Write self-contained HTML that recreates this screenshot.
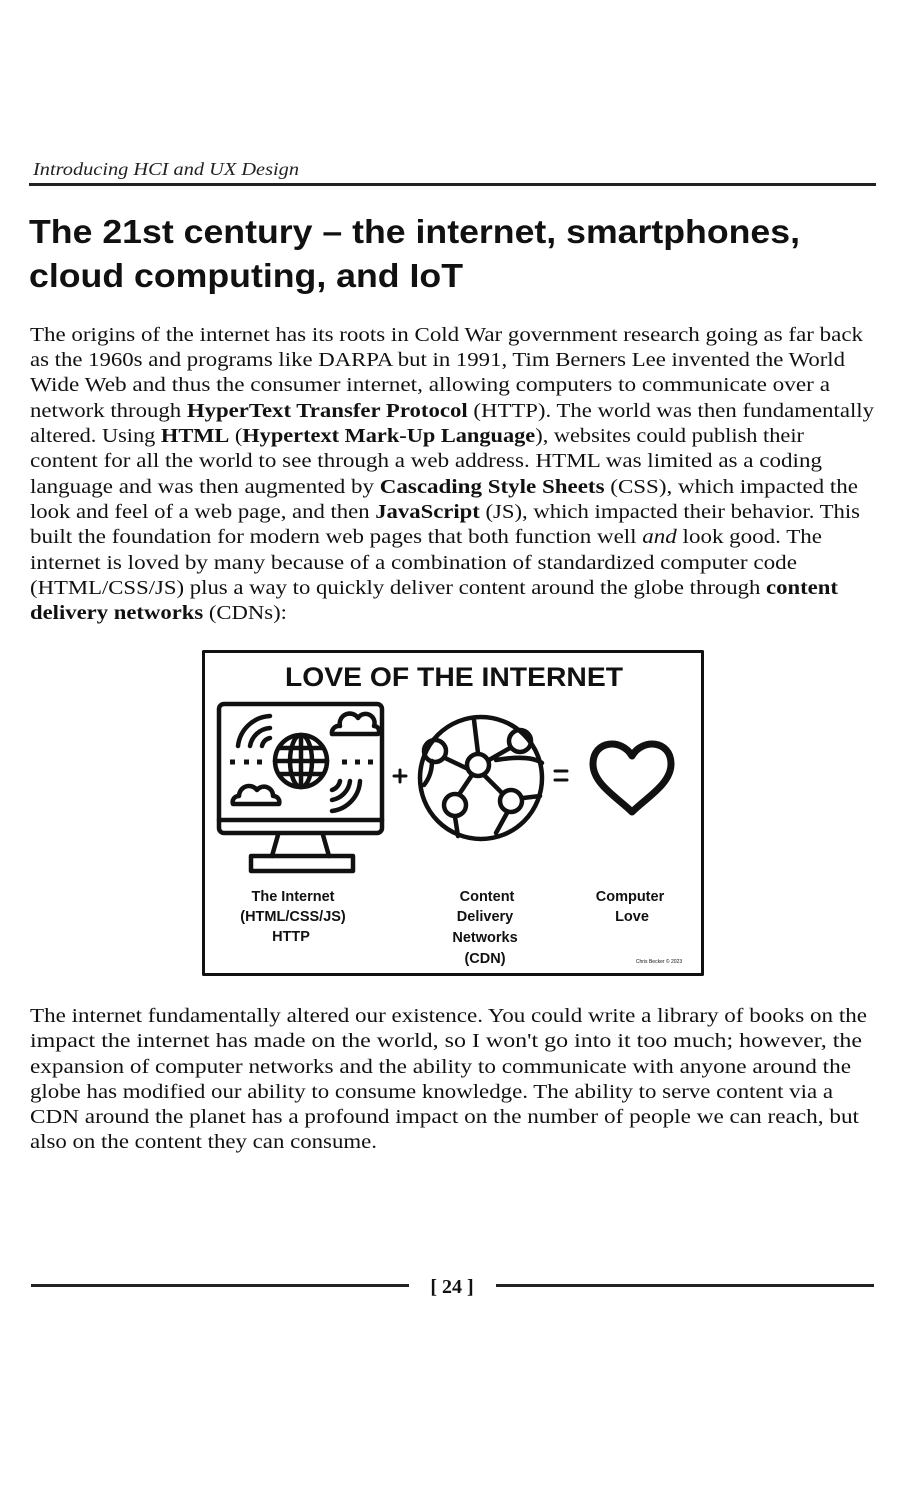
<!DOCTYPE html>
<html><head><meta charset="utf-8"><style>
html,body{margin:0;padding:0;background:#fff;width:900px;height:1500px;overflow:hidden}
svg{position:absolute;left:0;top:0}
.b{font-family:"Liberation Serif",serif;font-size:19.5px;fill:#111}
.bb{font-weight:bold}
</style></head><body>
<svg width="900" height="1500" viewBox="0 0 900 1500">
<text x="33" y="175" font-family="Liberation Serif,serif" font-style="italic" font-size="18" fill="#222" textLength="266" lengthAdjust="spacingAndGlyphs">Introducing HCI and UX Design</text>
<rect x="29" y="183" width="847" height="3" fill="#222"/>
<text x="29" y="243" font-family="Liberation Sans,sans-serif" font-weight="bold" font-size="33" fill="#111" textLength="771" lengthAdjust="spacingAndGlyphs">The 21st century – the internet, smartphones,</text>
<text x="29" y="287" font-family="Liberation Sans,sans-serif" font-weight="bold" font-size="33" fill="#111" textLength="434" lengthAdjust="spacingAndGlyphs">cloud computing, and IoT</text>
<g class="b">
<text x="30" y="341" textLength="833" lengthAdjust="spacingAndGlyphs">The origins of the internet has its roots in Cold War government research going as far back</text>
<text x="30" y="366" textLength="815" lengthAdjust="spacingAndGlyphs">as the 1960s and programs like DARPA but in 1991, Tim Berners Lee invented the World</text>
<text x="30" y="391" textLength="800" lengthAdjust="spacingAndGlyphs">Wide Web and thus the consumer internet, allowing computers to communicate over a</text>
<text x="30" y="417" textLength="844" lengthAdjust="spacingAndGlyphs">network through <tspan class="bb">HyperText Transfer Protocol</tspan> (HTTP). The world was then fundamentally</text>
<text x="30" y="442" textLength="774" lengthAdjust="spacingAndGlyphs">altered. Using <tspan class="bb">HTML</tspan> (<tspan class="bb">Hypertext Mark-Up Language</tspan>), websites could publish their</text>
<text x="30" y="467" textLength="792" lengthAdjust="spacingAndGlyphs">content for all the world to see through a web address. HTML was limited as a coding</text>
<text x="30" y="493" textLength="828" lengthAdjust="spacingAndGlyphs">language and was then augmented by <tspan class="bb">Cascading Style Sheets</tspan> (CSS), which impacted the</text>
<text x="30" y="518" textLength="830" lengthAdjust="spacingAndGlyphs">look and feel of a web page, and then <tspan class="bb">JavaScript</tspan> (JS), which impacted their behavior. This</text>
<text x="30" y="543" textLength="792" lengthAdjust="spacingAndGlyphs">built the foundation for modern web pages that both function well <tspan font-style="italic">and</tspan> look good. The</text>
<text x="30" y="569" textLength="767" lengthAdjust="spacingAndGlyphs">internet is loved by many because of a combination of standardized computer code</text>
<text x="30" y="594" textLength="808" lengthAdjust="spacingAndGlyphs">(HTML/CSS/JS) plus a way to quickly deliver content around the globe through <tspan class="bb">content</tspan></text>
<text x="30" y="619" textLength="257" lengthAdjust="spacingAndGlyphs"><tspan class="bb">delivery networks</tspan> (CDNs):</text>
<text x="30" y="1022" textLength="837" lengthAdjust="spacingAndGlyphs">The internet fundamentally altered our existence. You could write a library of books on the</text>
<text x="30" y="1047" textLength="832" lengthAdjust="spacingAndGlyphs">impact the internet has made on the world, so I won't go into it too much; however, the</text>
<text x="30" y="1073" textLength="821" lengthAdjust="spacingAndGlyphs">expansion of computer networks and the ability to communicate with anyone around the</text>
<text x="30" y="1098" textLength="803" lengthAdjust="spacingAndGlyphs">globe has modified our ability to consume knowledge. The ability to serve content via a</text>
<text x="30" y="1123" textLength="829" lengthAdjust="spacingAndGlyphs">CDN around the planet has a profound impact on the number of people we can reach, but</text>
<text x="30" y="1148" textLength="347" lengthAdjust="spacingAndGlyphs">also on the content they can consume.</text>
</g>
<rect x="31" y="1284" width="378" height="3" fill="#222"/>
<rect x="496" y="1284" width="378" height="3" fill="#222"/>
<text x="452" y="1293" text-anchor="middle" font-family="Liberation Serif,serif" font-weight="bold" font-size="20" fill="#111">[ 24 ]</text>
<g transform="translate(200,648)" fill="none" stroke="#111" stroke-width="4.5" stroke-linecap="round" stroke-linejoin="round">
<rect x="3.5" y="3.5" width="499" height="323" stroke-width="3" stroke-linecap="butt"/>
<text x="254" y="38" text-anchor="middle" font-family="Liberation Sans,sans-serif" font-weight="bold" font-size="27" fill="#111" stroke="none" textLength="338" lengthAdjust="spacingAndGlyphs">LOVE OF THE INTERNET</text>
<rect x="19" y="56" width="163" height="129" rx="5"/>
<line x1="19" y1="172" x2="182" y2="172"/>
<path d="M78 187 L72 208 M123 187 L129 208"/>
<rect x="51" y="208" width="102" height="15"/>
<circle cx="101" cy="113" r="26"/>
<ellipse cx="101" cy="113" rx="11" ry="26"/>
<line x1="101" y1="87" x2="101" y2="139"/>
<line x1="75" y1="113" x2="127" y2="113"/>
<line x1="79" y1="100" x2="123" y2="100"/>
<line x1="79" y1="126" x2="123" y2="126"/>
<g stroke-width="5" stroke-linecap="butt"><path d="M30 114h5M44 114h5M57 114h5M142 114h5M155 114h5M168 114h5"/></g>
<path d="M38 98 A34 34 0 0 1 70 68 M50 98 A22 22 0 0 1 70 80 M62 98 A10 10 0 0 1 70 90"/>
<path d="M160 133 A32 32 0 0 1 132 163 M150 133 A22 22 0 0 1 132 152 M140 133 A12 12 0 0 1 132 142"/>
<path d="M132 86 h46 M132 86 a7 7 0 0 1 8 -8 a10 10 0 0 1 18 -8 a9 9 0 0 1 16 8 a5 5 0 0 1 4 8"/>
<path d="M33 156 h46 a6 6 0 0 0 -6 -8 a9 9 0 0 0 -16 -6 a10 10 0 0 0 -18 6 a6 6 0 0 0 -6 8z"/>
<path d="M194 128h12M200 122v12" stroke-width="3"/>
<circle cx="281" cy="130" r="61"/>
<path d="M274 72 L278 105 M289 112 L310 100 M266 120 L245 110 M284 127 L302 145 M272 127 L260 145 M296 112 C320 108 335 110 342 115 M255 169 L258 188 M307 165 L296 185 M323 150 L340 148 M232 113 C232 125 228 132 224 137"/>
<circle cx="235" cy="103" r="11"/>
<circle cx="278" cy="117" r="11"/>
<circle cx="320" cy="93" r="11"/>
<circle cx="255" cy="157" r="11"/>
<circle cx="311" cy="153" r="11"/>
<path d="M355 123h12M355 132h12" stroke-width="3"/>
<path d="M432 108 C422 90 393 92 393 116 C393 136 418 150 432 164 C446 150 471 136 471 116 C471 92 442 90 432 108Z" stroke-width="7"/>
<g fill="#111" stroke="none" font-family="Liberation Sans,sans-serif" font-weight="bold" font-size="14.5" text-anchor="middle">
<text x="93" y="253">The Internet</text>
<text x="93" y="273">(HTML/CSS/JS)</text>
<text x="91" y="293">HTTP</text>
<text x="287" y="253">Content</text>
<text x="285" y="273">Delivery</text>
<text x="285" y="294">Networks</text>
<text x="285" y="315">(CDN)</text>
<text x="430" y="253">Computer</text>
<text x="432" y="273">Love</text>
<text x="459" y="315" font-size="5" font-weight="normal">Chris Becker © 2023</text>
</g>
</g>
</svg>
</body></html>
